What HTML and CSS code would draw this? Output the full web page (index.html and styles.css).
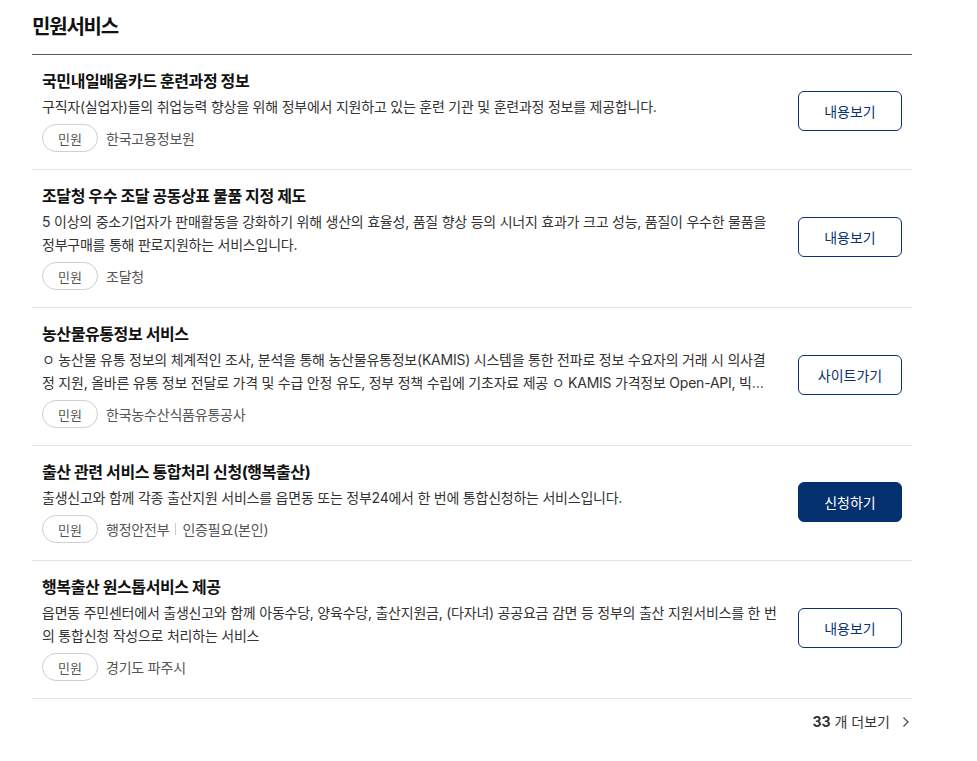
FILE: index.html
```html
<!DOCTYPE html>
<html lang="ko">
<head>
<meta charset="utf-8">
<link rel="stylesheet" href="styles.css">
</head>
<body>
<div class="wrap">
  <h2 class="head">민원서비스</h2>
  <ul class="list">
    <li class="item">
      <div class="body">
        <h3 class="title">국민내일배움카드 훈련과정 정보</h3>
        <p class="desc">구직자(실업자)들의 취업능력 향상을 위해 정부에서 지원하고 있는 훈련 기관 및 훈련과정 정보를 제공합니다.</p>
        <div class="meta"><span class="tag">민원</span><span class="org">한국고용정보원</span></div>
      </div>
      <a class="btn">내용보기</a>
    </li>
    <li class="item">
      <div class="body">
        <h3 class="title">조달청 우수 조달 공동상표 물품 지정 제도</h3>
        <p class="desc">5 이상의 중소기업자가 판매활동을 강화하기 위해 생산의 효율성, 품질 향상 등의 시너지 효과가 크고 성능, 품질이 우수한 물품을 정부구매를 통해 판로지원하는 서비스입니다.</p>
        <div class="meta"><span class="tag">민원</span><span class="org">조달청</span></div>
      </div>
      <a class="btn">내용보기</a>
    </li>
    <li class="item">
      <div class="body">
        <h3 class="title">농산물유통정보 서비스</h3>
        <p class="desc clamp">ㅇ 농산물 유통 정보의 체계적인 조사, 분석을 통해 농산물유통정보(KAMIS) 시스템을 통한 전파로 정보 수요자의 거래 시 의사결정 지원, 올바른 유통 정보 전달로 가격 및 수급 안정 유도, 정부 정책 수립에 기초자료 제공 ㅇ KAMIS 가격정보 Open-API, 빅데이터 제공</p>
        <div class="meta"><span class="tag">민원</span><span class="org">한국농수산식품유통공사</span></div>
      </div>
      <a class="btn">사이트가기</a>
    </li>
    <li class="item">
      <div class="body">
        <h3 class="title">출산 관련 서비스 통합처리 신청(행복출산)</h3>
        <p class="desc">출생신고와 함께 각종 출산지원 서비스를 읍면동 또는 정부24에서 한 번에 통합신청하는 서비스입니다.</p>
        <div class="meta"><span class="tag">민원</span><span class="org">행정안전부</span><span class="sep"></span><span class="org">인증필요(본인)</span></div>
      </div>
      <a class="btn primary">신청하기</a>
    </li>
    <li class="item">
      <div class="body">
        <h3 class="title">행복출산 원스톱서비스 제공</h3>
        <p class="desc">읍면동 주민센터에서 출생신고와 함께 아동수당, 양육수당, 출산지원금, (다자녀) 공공요금 감면 등 정부의 출산 지원서비스를 한 번의 통합신청 작성으로 처리하는 서비스</p>
        <div class="meta"><span class="tag">민원</span><span class="org">경기도 파주시</span></div>
      </div>
      <a class="btn">내용보기</a>
    </li>
  </ul>
  <div class="more-row">
    <a class="more"><b>33</b> 개 더보기
      <svg class="chev" width="8" height="12" viewBox="0 0 8 12"><path d="M1.5 1.5 L6 6 L1.5 10.5" fill="none" stroke="#555" stroke-width="1.4"/></svg>
    </a>
  </div>
</div>
</body>
</html>
```

FILE: styles.css
```css
* { box-sizing: border-box; }
body {
  margin: 0;
  background: #fff;
  font-family: Inter, "Noto Sans CJK KR", sans-serif;
  color: #222;
}
.wrap {
  width: 880px;
  margin-left: 32px;
  padding-top: 12px;
}
.head {
  margin: 0;
  font-size: 20px;
  line-height: 30px;
  font-weight: 700;
  color: #111;
  padding-bottom: 12px;
  border-bottom: 1px solid #5c5c5c;
  letter-spacing: -1.2px;
}
.list {
  list-style: none;
  margin: 0;
  padding: 0;
}
.item {
  display: flex;
  align-items: center;
  gap: 20px;
  padding: 14px 10px 17px;
  border-bottom: 1px solid #e3e3e3;
}
.body {
  flex: 1;
  min-width: 0;
}
.title {
  margin: 0;
  font-size: 16px;
  line-height: 24px;
  font-weight: 700;
  color: #111;
  letter-spacing: -0.4px;
}
.desc {
  margin: 2px 0 0;
  font-size: 14px;
  line-height: 23px;
  color: #333;
  letter-spacing: -0.23px;
}
.clamp {
  display: -webkit-box;
  -webkit-line-clamp: 2;
  -webkit-box-orient: vertical;
  overflow: hidden;
  padding-right: 5px;
}
.meta {
  display: flex;
  align-items: center;
  margin-top: 6px;
  height: 28px;
}
.tag {
  display: inline-flex;
  align-items: center;
  justify-content: center;
  width: 56px;
  height: 28px;
  border: 1px solid #cfcfcf;
  border-radius: 14px;
  font-size: 13px;
  color: #555;
  margin-right: 8px;
}
.org {
  font-size: 14px;
  color: #555;
  letter-spacing: -0.2px;
}
.sep {
  width: 1px;
  height: 12px;
  background: #ccc;
  margin: 0 6px;
}
.btn {
  flex: none;
  display: flex;
  align-items: center;
  justify-content: center;
  width: 104px;
  height: 40px;
  border: 1px solid #0c3172;
  border-radius: 6px;
  font-size: 14px;
  color: #0c3172;
  background: #fff;
  cursor: pointer;
}
.btn.primary {
  background: #04306f;
  border-color: #04306f;
  color: #fff;
}
.more-row {
  display: flex;
  justify-content: flex-end;
  padding: 13px 2px 0 0;
}
.more {
  display: flex;
  align-items: center;
  font-size: 14px;
  line-height: 20px;
  color: #333;
}
.more b {
  font-weight: 700;
  margin-right: 4px;
}
.chev {
  margin-left: 12px;
}
```
